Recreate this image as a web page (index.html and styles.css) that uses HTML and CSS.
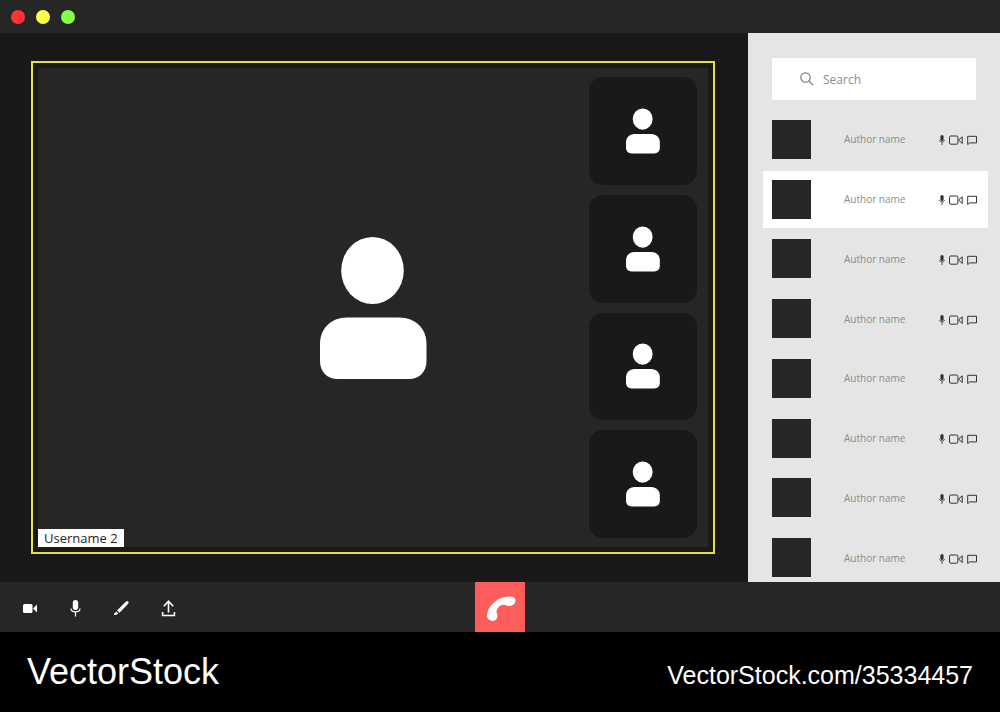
FILE: index.html
```html
<!DOCTYPE html>
<html lang="en">
<head>
  <meta charset="UTF-8" />
  <meta name="viewport" content="width=device-width, initial-scale=1" />
  <title>Video Call</title>
  <link rel="stylesheet" href="styles.css">
</head>
<body>
  <!-- Shared icons -->
  <svg class="sprite" aria-hidden="true">
    <symbol id="person" viewBox="0 0 107 142">
      <ellipse cx="52.500" cy="33.500" rx="31.300" ry="33.500" />
      <path d="M27 80.500H79C96 80.500 106.500 92 106.500 107V124C106.500 135 99 142 89 142H17.500C7.500 142 0 135 0 124V107C0 92 10.500 80.500 27 80.500Z" />
    </symbol>
    <symbol id="mic-small" viewBox="0 0 6 10">
      <rect x="1.400" y="0" width="3.200" height="6" rx="1.600" fill="currentColor" />
      <path d="M0.500 5C0.500 7.600 5.500 7.600 5.500 5M3 7V10" fill="none" stroke="currentColor" stroke-width="0.800" />
    </symbol>
    <symbol id="cam-small" viewBox="0 0 14 10">
      <rect x="0.500" y="1" width="8.400" height="8.200" rx="1.200" fill="none" stroke="currentColor" stroke-width="1" />
      <path d="M9.600 5L13.200 1.800V8.600Z" fill="none" stroke="currentColor" stroke-width="1" stroke-linejoin="round" />
    </symbol>
    <symbol id="chat-small" viewBox="0 0 10 10">
      <path d="M0.700 9.600V1.300H9.500V7.900H2.600Z" fill="none" stroke="currentColor" stroke-width="1" stroke-linejoin="round" />
    </symbol>
  </svg>

  <header class="titlebar">
    <button type="button" class="dot dot-close" aria-label="Close"></button>
    <button type="button" class="dot dot-minimize" aria-label="Minimize"></button>
    <button type="button" class="dot dot-expand" aria-label="Expand"></button>
  </header>

  <main class="main">
    <section class="stage">
      <div class="frame">
        <div class="screen">
          <svg class="speaker"><use href="#person" /></svg>
          <span class="username">Username 2</span>
          <div class="tiles">
            <div class="tile"><svg class="tile-person"><use href="#person" /></svg></div>
            <div class="tile"><svg class="tile-person"><use href="#person" /></svg></div>
            <div class="tile"><svg class="tile-person"><use href="#person" /></svg></div>
            <div class="tile"><svg class="tile-person"><use href="#person" /></svg></div>
          </div>
        </div>
      </div>
    </section>

    <aside class="sidebar">
      <label class="search" for="search">
        <svg class="search-icon" viewBox="0 0 14 14" aria-hidden="true">
          <circle cx="5.500" cy="5.500" r="4.700" />
          <path d="M9 9L13 13" />
        </svg>
        <input type="text" id="search" placeholder="Search" aria-label="Search" />
      </label>

      <ul class="people">
        <li class="person">
          <span class="avatar"></span><span class="name">Author name</span>
          <span class="status"><svg class="i-mic"><use href="#mic-small" /></svg><svg class="i-cam"><use href="#cam-small" /></svg><svg class="i-chat"><use href="#chat-small" /></svg></span>
        </li>
        <li class="person active">
          <span class="avatar"></span><span class="name">Author name</span>
          <span class="status"><svg class="i-mic"><use href="#mic-small" /></svg><svg class="i-cam"><use href="#cam-small" /></svg><svg class="i-chat"><use href="#chat-small" /></svg></span>
        </li>
        <li class="person">
          <span class="avatar"></span><span class="name">Author name</span>
          <span class="status"><svg class="i-mic"><use href="#mic-small" /></svg><svg class="i-cam"><use href="#cam-small" /></svg><svg class="i-chat"><use href="#chat-small" /></svg></span>
        </li>
        <li class="person">
          <span class="avatar"></span><span class="name">Author name</span>
          <span class="status"><svg class="i-mic"><use href="#mic-small" /></svg><svg class="i-cam"><use href="#cam-small" /></svg><svg class="i-chat"><use href="#chat-small" /></svg></span>
        </li>
        <li class="person">
          <span class="avatar"></span><span class="name">Author name</span>
          <span class="status"><svg class="i-mic"><use href="#mic-small" /></svg><svg class="i-cam"><use href="#cam-small" /></svg><svg class="i-chat"><use href="#chat-small" /></svg></span>
        </li>
        <li class="person">
          <span class="avatar"></span><span class="name">Author name</span>
          <span class="status"><svg class="i-mic"><use href="#mic-small" /></svg><svg class="i-cam"><use href="#cam-small" /></svg><svg class="i-chat"><use href="#chat-small" /></svg></span>
        </li>
        <li class="person">
          <span class="avatar"></span><span class="name">Author name</span>
          <span class="status"><svg class="i-mic"><use href="#mic-small" /></svg><svg class="i-cam"><use href="#cam-small" /></svg><svg class="i-chat"><use href="#chat-small" /></svg></span>
        </li>
        <li class="person">
          <span class="avatar"></span><span class="name">Author name</span>
          <span class="status"><svg class="i-mic"><use href="#mic-small" /></svg><svg class="i-cam"><use href="#cam-small" /></svg><svg class="i-chat"><use href="#chat-small" /></svg></span>
        </li>
      </ul>
    </aside>
  </main>

  <!-- Call controls -->
  <div class="toolbar">
    <div class="tools">
      <button type="button" class="tool" aria-label="Camera">
        <svg viewBox="0 0 24 24">
          <rect x="5" y="8" width="9.500" height="9" rx="1.500" fill="#fff" />
          <path d="M15 12.500L19 8.500V16.500Z" fill="#fff" />
        </svg>
      </button>
      <button type="button" class="tool" aria-label="Microphone">
        <svg viewBox="0 0 24 24">
          <rect x="8.800" y="4" width="5.400" height="10" rx="2.700" fill="#fff" />
          <path d="M7 12.500C7 17 16 17 16 12.500M11.500 16V20.500" fill="none" stroke="#fff" stroke-width="1.200" />
        </svg>
      </button>
      <button type="button" class="tool" aria-label="Draw">
        <svg viewBox="0 0 24 24">
          <path d="M7 14.500L15 6.500C16.200 5 17.400 4.600 18.200 5.400C19 6.300 18.500 7.300 17.500 8.500L9.500 16.700Z" fill="#fff" />
          <path d="M6.200 15.500L8.400 17.700L6 18.700C4.500 19.500 3.400 18.700 4.200 17.400Z" fill="#fff" />
        </svg>
      </button>
      <button type="button" class="tool" aria-label="Share">
        <svg viewBox="0 0 24 24">
          <path d="M6.600 16V19.500H18.400V16M12.500 16.500V5.500M7.800 10.200L12.500 5.200L17.200 10.200" fill="none" stroke="#fff" stroke-width="1.600" />
        </svg>
      </button>
    </div>
    <button type="button" class="hangup" aria-label="End call">
      <svg viewBox="0 0 50 50">
        <path d="M12 33C13 25 20 17 30 15C34 14 40.500 14 40.500 18.500C40.500 22 37 24.200 34 24C31 23.800 30 22 27 23C24 24 21.500 27 21.500 30C22 32 23 33 22 36C21 39 17 39.500 15 38.300C12.500 37 12 35 12 33Z" fill="#fff" />
      </svg>
    </button>
  </div>

  <footer class="footer">
    <span class="brand">VectorStock</span>
    <a href="#" class="link">VectorStock.com/35334457</a>
  </footer>
</body>
</html>
```
FILE: styles.css
```css
* {
  box-sizing: border-box;
}

body {
  margin: 0;
  min-height: 100vh;
  display: flex;
  flex-direction: column;
  font-family: "Open Sans", "Noto Sans", sans-serif;
  background: #000;
}

button {
  padding: 0;
  border: none;
  background: none;
  cursor: pointer;
}

svg {
  display: block;
}

.sprite {
  position: absolute;
  width: 0;
  height: 0;
}

.titlebar {
  display: flex;
  align-items: center;
  gap: 11px;
  height: 33px;
  padding: 0 11px;
  background: #262626;
}

.dot {
  width: 14px;
  height: 14px;
  border-radius: 50%;
}

.dot-close {
  background: #ff3434;
}

.dot-minimize {
  background: #ffff4b;
}

.dot-expand {
  background: #86ff4b;
}

.main {
  flex: 1;
  display: flex;
}

.stage {
  flex: 1;
  display: flex;
  padding: 28px 33px 28px 31px;
  background: #191919;
}

.frame {
  flex: 1;
  display: flex;
  padding: 5px;
  border: 2px solid #e8e047;
}

/* speaker, label and tiles share one grid cell */
.screen {
  flex: 1;
  display: grid;
  background: #262626;
}

.speaker,
.username,
.tiles {
  grid-area: 1 / 1;
}

.speaker {
  place-self: center;
  width: 107px;
  height: 142px;
  fill: #fff;
}

.username {
  place-self: end start;
  padding: 0 6px;
  background: #fff;
  color: #262626;
  font-size: 13px;
  line-height: 18px;
}

.tiles {
  justify-self: end;
  display: flex;
  flex-direction: column;
  gap: 10px;
  width: 108px;
  margin: 9px 11px 9px 0;
}

.tile {
  flex: 1;
  display: flex;
  align-items: center;
  justify-content: center;
  border-radius: 14px;
  background: #191919;
}

.tile-person {
  width: 34px;
  height: 46px;
  fill: #fff;
}

.sidebar {
  display: flex;
  flex-direction: column;
  width: 252px;
  padding-top: 25px;
  background: #e5e5e5;
  overflow: hidden;
}

.search {
  display: flex;
  align-items: center;
  gap: 9px;
  height: 42px;
  margin: 0 24px;
  padding-left: 28px;
  background: #fff;
}

.search-icon {
  width: 14px;
  height: 14px;
  fill: none;
  stroke: #808080;
  stroke-width: 1.2;
}

.search input {
  flex: 1;
  min-width: 0;
  padding: 0;
  border: none;
  outline: none;
  font-family: inherit;
  font-size: 12px;
}

.search input::placeholder {
  color: #8c8c8c;
}

/* the last row runs slightly under the toolbar */
.people {
  flex: 1;
  display: grid;
  grid-auto-rows: 1fr;
  gap: 3px;
  margin: 11px 12px -4px 15px;
  padding: 0;
  list-style: none;
}

.person {
  display: flex;
  align-items: center;
  padding: 0 11px 0 9px;
}

.person.active {
  background: #fff;
}

.avatar {
  width: 39px;
  height: 39px;
  margin-right: 33px;
  background: #262626;
}

.name {
  flex: 1;
  color: #8c8c8c;
  font-size: 10px;
  line-height: 16px;
}

.status {
  display: flex;
  gap: 4px;
  padding-top: 2px;
  color: #333;
}

.status svg {
  height: 10px;
}

.i-mic {
  width: 6px;
}

.i-cam {
  width: 14px;
}

.i-chat {
  width: 10px;
}

.toolbar {
  display: grid;
  grid-template-columns: 1fr auto 1fr;
  height: 50px;
  background: #262626;
}

.tools {
  display: flex;
  align-items: center;
  gap: 22px;
  padding: 2px 0 0 18px;
}

.tool svg {
  width: 24px;
  height: 24px;
}

.hangup {
  width: 50px;
  background: #ff5c5c;
}

.footer {
  display: flex;
  align-items: baseline;
  justify-content: space-between;
  height: 80px;
  padding: 0 27px;
  background: #000;
  font-family: "Liberation Sans", Arial, sans-serif;
  line-height: 80px;
}

.brand {
  color: #fff;
  font-size: 36px;
}

.link {
  color: #fff;
  font-size: 25px;
  text-decoration: none;
}
```
